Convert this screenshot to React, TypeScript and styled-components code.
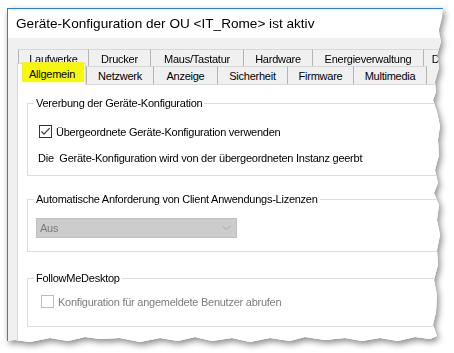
import React from 'react';
import styled, { createGlobalStyle } from 'styled-components';

const ORIGIN_X = 7;
const ORIGIN_Y = 8;
const tornPoints: [number, number][] = [
  [7, 8], [443, 8], [442, 18], [439, 30], [441, 42], [437, 55], [439, 68], [435, 82], [436, 92],
  [433, 100], [437, 112], [440, 126], [438, 140], [439, 155], [435, 170], [438, 183], [434, 193],
  [439, 205], [437, 220], [440, 235], [437, 250], [438, 265], [434, 280], [437, 295], [436, 312],
  [433, 325], [437, 336], [430, 339], [415, 337], [398, 341], [380, 338], [362, 341], [345, 338],
  [325, 340], [305, 337], [290, 341], [270, 338], [250, 342], [232, 338], [212, 341], [195, 337],
  [178, 341], [160, 338], [140, 342], [120, 338], [100, 339], [85, 337], [68, 341], [50, 338],
  [30, 342], [15, 340], [7, 341],
];
const TORN = tornPoints.map(([x, y]) => `${x - ORIGIN_X}px ${y - ORIGIN_Y}px`).join(', ');

const Global = createGlobalStyle`
  html, body { margin: 0; padding: 0; background: #ffffff; }
  body {
    font-family: "Liberation Sans", Arial, sans-serif;
    font-size: 11px;
    letter-spacing: -0.25px;
    color: #000000;
  }
  *, *::before, *::after { box-sizing: border-box; }
`;

const Page = styled.div`
  width: 454px;
  height: 353px;
  padding: 8px 0 0 7px;
  overflow: hidden;
`;

const Shadow = styled.div`
  width: 440px;
  filter: drop-shadow(2px 3px 3px rgba(0, 0, 0, 0.45));
`;

const Window = styled.div`
  width: 440px;
  height: 340px;
  display: flex;
  flex-direction: column;
  overflow: hidden;
  background: #ffffff;
  border-top: 1px solid #2b80d8;
  border-left: 1px solid #2b80d8;
  clip-path: polygon(${TORN});
`;

const TitleBar = styled.div`
  height: 29px;
  display: flex;
  align-items: center;
  padding-left: 8px;
  font-size: 13.6px;
  letter-spacing: 0;
  color: #000;
  white-space: nowrap;
`;

const Client = styled.div`
  flex: 1;
  display: flex;
  flex-direction: column;
  background: #f0f0f0;
  padding: 11px 0 0 9px;
`;

const BackRow = styled.div`
  display: flex;
  height: 17px;
  margin-left: 1px;
`;

const FrontRow = styled.div`
  display: flex;
  height: 18px;
  position: relative;
  z-index: 1;
`;

const Tab = styled.div<{ $w: number; $last?: boolean }>`
  flex: none;
  width: ${(p) => p.$w}px;
  display: flex;
  justify-content: center;
  align-items: center;
  padding-top: 1px;
  background: #f0f0f0;
  border-top: 1px solid #d9d9d9;
  border-left: 1px solid #b4b4b4;
  border-right: ${(p) => (p.$last ? '1px solid #b4b4b4' : 'none')};
  white-space: nowrap;
`;

const SelectedTab = styled.div<{ $w: number }>`
  flex: none;
  width: ${(p) => p.$w}px;
  height: 22px;
  margin-top: -3px;
  display: flex;
  align-items: flex-start;
  justify-content: flex-start;
  padding-left: 4px;
  background: #ffffff;
  border: 1px solid #d9d9d9;
  border-bottom: none;
  white-space: nowrap;
`;

const Highlight = styled.span`
  display: block;
  height: 20px;
  margin-top: -2px;
  padding: 6px 9px 0 7px;
  line-height: 12px;
  background: #f6f60e;
`;

const Panel = styled.div`
  flex: 1;
  display: flex;
  flex-direction: column;
  background: #ffffff;
  border: 1px solid #d9d9d9;
  border-right: none;
  padding: 12px 0 0 9px;
`;

const Group = styled.fieldset<{ $top: number; $pt: number; $pb: number }>`
  margin: ${(p) => p.$top}px 0 0 0;
  padding: ${(p) => p.$pt}px 0 ${(p) => p.$pb}px 6px;
  border: 1px solid #dcdcdc;
  border-right: none;
  min-width: 0;
`;

const Legend = styled.legend`
  padding: 0 2px;
  line-height: 12px;
  color: #000;
  white-space: nowrap;
`;

const CheckRow = styled.label<{ $indent: number; $disabled?: boolean }>`
  display: flex;
  align-items: center;
  height: 13px;
  margin-left: ${(p) => p.$indent}px;
  gap: 4px;
  color: ${(p) => (p.$disabled ? '#7d7d7d' : '#000')};
  white-space: nowrap;
`;

const Box = styled.span<{ $disabled?: boolean }>`
  flex: none;
  width: 13px;
  height: 13px;
  display: flex;
  align-items: center;
  justify-content: center;
  background: #ffffff;
  border: 1px solid ${(p) => (p.$disabled ? '#bcbcbc' : '#333333')};
`;

const InfoText = styled.div`
  margin: 13px 0 0 4px;
  line-height: 14px;
  white-space: nowrap;
`;

const Combo = styled.div`
  width: 201px;
  height: 20px;
  margin-left: 2px;
  display: flex;
  align-items: center;
  justify-content: space-between;
  padding: 0 5px 0 3px;
  background: #cccccc;
  border: 1px solid #bfbfbf;
  color: #7a7a7a;
`;

const Check = () => (
  <svg width="11" height="11" viewBox="0 0 11 11">
    <path d="M1.5 5.5 L4 8.2 L9.6 2.2" fill="none" stroke="#3a3a3a" strokeWidth="1.2" />
  </svg>
);

const Chevron = () => (
  <svg width="9" height="6" viewBox="0 0 9 6">
    <path d="M0.5 0.8 L4.5 4.8 L8.5 0.8" fill="none" stroke="#a8a8a8" strokeWidth="1" />
  </svg>
);

const backTabs: [string, number][] = [
  ['Laufwerke', 70],
  ['Drucker', 62],
  ['Maus/Tastatur', 93],
  ['Hardware', 69],
  ['Energieverwaltung', 111],
  ['D', 24],
];

const frontTabs: [string, number][] = [
  ['Netzwerk', 67],
  ['Anzeige', 64],
  ['Sicherheit', 70],
  ['Firmware', 66],
  ['Multimedia', 74],
];

export default function App() {
  return (
    <>
      <Global />
      <Page>
        <Shadow>
          <Window>
            <TitleBar>Geräte-Konfiguration der OU &lt;IT_Rome&gt; ist aktiv</TitleBar>
            <Client>
              <BackRow>
                {backTabs.map(([t, w]) => (
                  <Tab key={t} $w={w}>
                    {t}
                  </Tab>
                ))}
              </BackRow>
              <FrontRow>
                <SelectedTab $w={69}>
                  <Highlight>Allgemein</Highlight>
                </SelectedTab>
                {frontTabs.map(([t, w], i) => (
                  <Tab key={t} $w={w} $last={i === frontTabs.length - 1}>
                    {t}
                  </Tab>
                ))}
              </FrontRow>
              <Panel>
                <Group $top={0} $pt={16} $pb={10}>
                  <Legend>Vererbung der Geräte-Konfiguration</Legend>
                  <CheckRow $indent={5}>
                    <Box>
                      <Check />
                    </Box>
                    Übergeordnete Geräte-Konfiguration verwenden
                  </CheckRow>
                  <InfoText>Die&nbsp; Geräte-Konfiguration wird von der übergeordneten Instanz geerbt</InfoText>
                </Group>
                <Group $top={17} $pt={13} $pb={13}>
                  <Legend>Automatische Anforderung von Client Anwendungs-Lizenzen</Legend>
                  <Combo>
                    <span>Aus</span>
                    <Chevron />
                  </Combo>
                </Group>
                <Group $top={20} $pt={11} $pb={18}>
                  <Legend>FollowMeDesktop</Legend>
                  <CheckRow $indent={7} $disabled>
                    <Box $disabled />
                    Konfiguration für angemeldete Benutzer abrufen
                  </CheckRow>
                </Group>
              </Panel>
            </Client>
          </Window>
        </Shadow>
      </Page>
    </>
  );
}
